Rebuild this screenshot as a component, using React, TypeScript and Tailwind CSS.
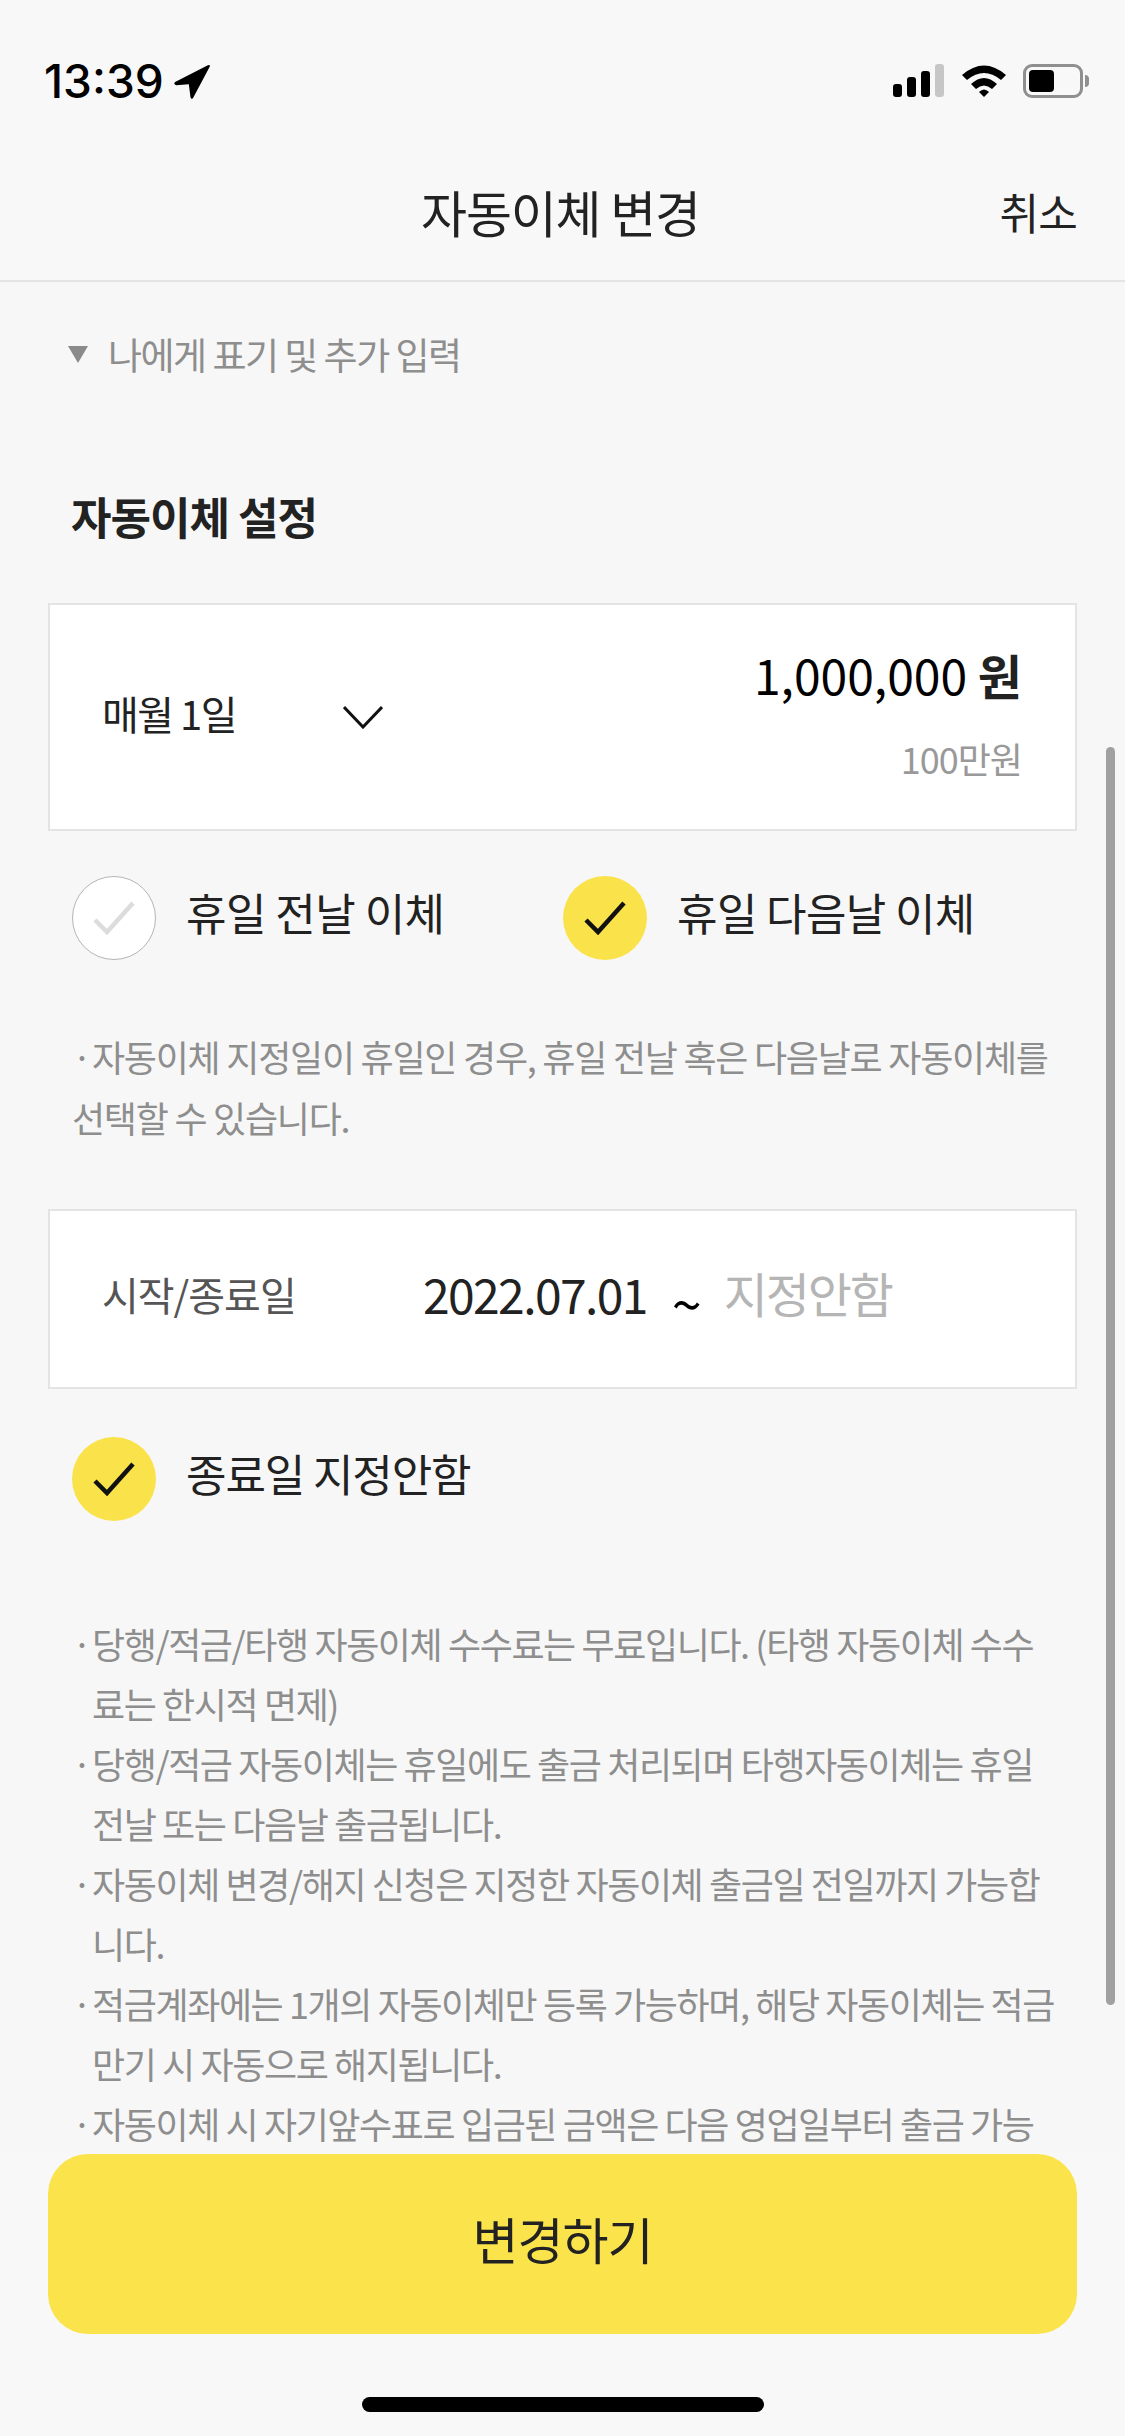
const font = { fontFamily: '"Noto Sans CJK KR", sans-serif' };

const notes = [
  ['당행/적금/타행 자동이체 수수료는 무료입니다. (타행 자동이체 수수', '료는 한시적 면제)'],
  ['당행/적금 자동이체는 휴일에도 출금 처리되며 타행자동이체는 휴일', '전날 또는 다음날 출금됩니다.'],
  ['자동이체 변경/해지 신청은 지정한 자동이체 출금일 전일까지 가능합', '니다.'],
  ['적금계좌에는 1개의 자동이체만 등록 가능하며, 해당 자동이체는 적금', '만기 시 자동으로 해지됩니다.'],
  ['자동이체 시 자기앞수표로 입금된 금액은 다음 영업일부터 출금 가능'],
];

function Check({ on }: { on: boolean }) {
  return (
    <div
      className={
        on
          ? 'flex h-[84px] w-[84px] shrink-0 items-center justify-center rounded-full bg-[#fae34a]'
          : 'flex h-[84px] w-[84px] shrink-0 items-center justify-center rounded-full border border-[#b5b5b5] bg-white'
      }
    >
      <svg width="42" height="34" viewBox="0 0 42 34" fill="none">
        <path d="M2 19 L14 31 L40 2" stroke={on ? '#111' : '#dcdcdc'} strokeWidth="4.5" />
      </svg>
    </div>
  );
}

function StatusBar() {
  return (
    <div className="flex h-[132px] shrink-0 items-start justify-between pl-[44px] pr-[36px] pt-[58px]">
      <div className="flex items-center gap-[9px]">
        <span className="text-[46px] leading-[46px] font-medium text-black" style={{ fontFamily: 'Inter, sans-serif' }}>
          13:39
        </span>
        <svg width="38" height="38" viewBox="0 0 36 36">
          <path d="M2 19 L33 3 Q36 2 34.5 5 L19 34 Q17 36 16.5 33 L15 21 L3 22 Q0 21 2 19 Z" fill="#000" />
        </svg>
      </div>
      <div className="flex items-center gap-[16px] pt-[6px]">
        <svg width="52" height="34" viewBox="0 0 52 34">
          <rect x="0" y="20" width="9" height="13" rx="3" fill="#000" />
          <rect x="14" y="13" width="9" height="20" rx="3" fill="#000" />
          <rect x="28" y="7" width="9" height="26" rx="3" fill="#000" />
          <rect x="42" y="0" width="9" height="33" rx="3" fill="#c6c6c6" />
        </svg>
        <svg width="46" height="34" viewBox="0 0 46 34">
          <path d="M1 11 Q23 -8 45 11 L40 16 Q23 2 6 16 Z" fill="#000" />
          <path d="M10 20 Q23 8 36 20 L31 25 Q23 18 15 25 Z" fill="#000" />
          <path d="M18 28 Q23 23 28 28 L23 33 Z" fill="#000" />
        </svg>
        <div className="flex items-center gap-[2px]">
          <div className="flex h-[34px] w-[60px] items-center rounded-[9px] border-[3px] border-[#8f8f8f] p-[3px]">
            <div className="h-full w-[25px] rounded-[4px] bg-black" />
          </div>
          <div className="h-[12px] w-[4px] rounded-r-full bg-[#8f8f8f]" />
        </div>
      </div>
    </div>
  );
}

export default function App() {
  return (
    <div className="relative flex h-[2436px] w-[1125px] flex-col overflow-hidden bg-[#f8f8f8] text-[#222]" style={font}>
      <StatusBar />

      <header className="relative flex h-[150px] shrink-0 items-center justify-center border-b-2 border-[#e4e4e4] pr-[4px] pt-[10px]">
        <h1 className="text-[50px] leading-none font-normal tracking-[-1.2px]">자동이체 변경</h1>
        <span className="absolute right-[48px] text-[43px] leading-none tracking-[-0.8px]">취소</span>
      </header>

      <main className="min-h-0 flex-1 overflow-hidden bg-[#f7f7f7]">
        <div className="flex items-center gap-[20px] pl-[68px] pt-[49px]">
          <div className="h-0 w-0 border-x-[10px] border-t-[17px] border-x-transparent border-t-[#8a8a8a]" />
          <span className="text-[37px] leading-[46px] tracking-[-1.5px] text-[#8e8e8e]">나에게 표기 및 추가 입력</span>
        </div>

        <h2 className="pl-[71px] pt-[114px] text-[44px] leading-[50px] font-bold tracking-[-1px]">자동이체 설정</h2>

        <section className="mx-[48px] mt-[62px] flex h-[228px] items-center justify-between border-2 border-[#e4e4e4] bg-white pl-[52px] pr-[53px]">
          <div className="flex items-center">
            <span className="w-[241px] pb-[8px] text-[40px] leading-none tracking-[-1.5px]">매월 1일</span>
            <svg width="40" height="24" viewBox="0 0 40 24" fill="none">
              <path d="M1 2 L20 22 L39 2" stroke="#111" strokeWidth="3" />
            </svg>
          </div>
          <div className="flex flex-col items-end pb-[8px]">
            <div className="text-[48px] leading-[56px] text-black">
              1,000,000 <span className="font-bold text-[#222]">원</span>
            </div>
            <div className="mt-[34px] text-[36px] leading-[44px] tracking-[-1px] text-[#999]">100만원</div>
          </div>
        </section>

        <div className="flex pl-[72px] pt-[45px]">
          <label className="flex w-[491px] items-center gap-[30px]">
            <Check on={false} />
            <span className="pb-[12px] text-[44px] leading-none tracking-[-0.5px]">휴일 전날 이체</span>
          </label>
          <label className="flex items-center gap-[30px]">
            <Check on />
            <span className="pb-[12px] text-[44px] leading-none tracking-[-0.6px]">휴일 다음날 이체</span>
          </label>
        </div>

        <div className="pl-[72px] pt-[66px] text-[36px] leading-[61px] tracking-[-1.25px] whitespace-nowrap text-[#8e8e8e]">
          <div className="flex">
            <span className="w-[20px]">·</span>
            <span>자동이체 지정일이 휴일인 경우, 휴일 전날 혹은 다음날로 자동이체를</span>
          </div>
          <div>선택할 수 있습니다.</div>
        </div>

        <section className="mx-[48px] mt-[61px] flex h-[180px] items-center border-2 border-[#e4e4e4] bg-white pl-[52px]">
          <span className="w-[321px] pb-[10px] text-[40px] leading-none tracking-[-1px] text-[#555]">시작/종료일</span>
          <span className="pb-[12px] text-[48px] leading-none tracking-[-1.6px]">2022.07.01</span>
          <span className="ml-[25px] pt-[6px] text-[54px] leading-none text-black">~</span>
          <span className="ml-[22px] pb-[14px] text-[48px] leading-none tracking-[-2.2px] text-[#b5b5b5]">지정안함</span>
        </section>

        <label className="flex items-center gap-[30px] pl-[72px] pt-[48px]">
          <Check on />
          <span className="pb-[12px] text-[44px] leading-none tracking-[-1.1px]">종료일 지정안함</span>
        </label>

        <ul className="pl-[72px] pt-[92px] text-[36px] leading-[60px] tracking-[-1.4px] whitespace-nowrap text-[#8e8e8e]">
          {notes.map((lines) => (
            <li key={lines[0]}>
              <div className="flex">
                <span className="w-[20px]">·</span>
                <span>{lines[0]}</span>
              </div>
              {lines[1] && <div className="pl-[20px]">{lines[1]}</div>}
            </li>
          ))}
        </ul>
      </main>

      <footer className="h-[283px] shrink-0 bg-[#f8f8f8] px-[48px] pt-[1px]">
        <button className="flex h-[180px] w-full items-center justify-center rounded-[40px] bg-[#fbe34b] pb-[12px] text-[50px] tracking-[-1px] text-[#222]">
          변경하기
        </button>
        <div className="mx-auto mt-[63px] h-[15px] w-[402px] rounded-full bg-black" />
      </footer>

      <div className="absolute left-[1106px] top-[747px] h-[1258px] w-[9px] rounded-full bg-[#a0a0a0]" />
    </div>
  );
}
